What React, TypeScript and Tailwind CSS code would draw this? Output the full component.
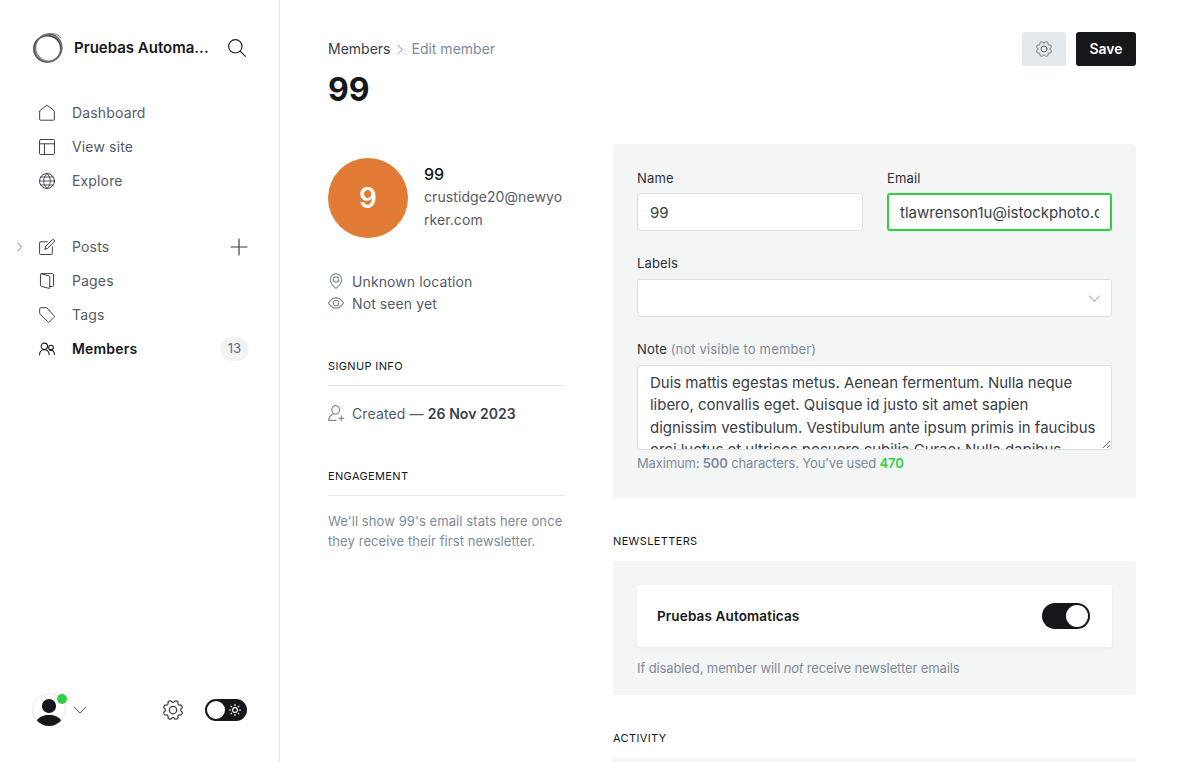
import React from "react";

type IconProps = { className?: string; children: React.ReactNode; sw?: number };

function Icon({ className = "", children, sw = 1.5 }: IconProps) {
  return (
    <svg viewBox="0 0 24 24" fill="none" stroke="currentColor" strokeWidth={sw} strokeLinecap="round" strokeLinejoin="round" className={`shrink-0 overflow-visible ${className}`}>
      {children}
    </svg>
  );
}

// Eight rounded teeth, with a notch at the top.
const gearPoints = Array.from({ length: 192 }, (_, i) => {
  const a = (i / 192) * Math.PI * 2;
  const r = 10.3 + 1.35 * Math.tanh(1.6 * (0.25 - Math.cos(8 * a)));
  return `${(12 + r * Math.sin(a)).toFixed(2)},${(12 - r * Math.cos(a)).toFixed(2)}`;
}).join(" ");

function Gear({ className }: { className?: string }) {
  return (
    <Icon className={className}>
      <polygon points={gearPoints} />
      <circle cx="12" cy="12" r="4.5" />
    </Icon>
  );
}

function Logo() {
  return (
    <svg viewBox="0 0 32 32" fill="none" className="h-8 w-8 shrink-0">
      <ellipse cx="15.4" cy="16.8" rx="13.5" ry="13.2" stroke="#4a4a4a" strokeWidth="1.7" />
      <ellipse cx="16.8" cy="15.7" rx="13.2" ry="13.5" stroke="#808080" strokeWidth="1.4" />
      <ellipse cx="16.1" cy="16.1" rx="14.2" ry="13" transform="rotate(-55 16.1 16.1)" stroke="#666" strokeWidth="1" />
      <path d="M14.5 2.3C19 .5 26 1.6 28.8 6.2" stroke="#777" strokeWidth="1" />
    </svg>
  );
}

const icons = {
  home: (
    <path d="M1 9.6V21.5A1.3 1.3 0 0 0 2.3 22.8H21.7A1.3 1.3 0 0 0 23 21.5V9.6A2 2 0 0 0 22.2 8L13 1A1.7 1.7 0 0 0 11 1L1.8 8A2 2 0 0 0 1 9.6Z" />
  ),
  layout: (
    <>
      <rect x=".8" y=".8" width="22.4" height="22.4" rx="1.5" />
      <path d="M1 7.2H23M8.2 7.2V23" />
    </>
  ),
  globe: (
    <>
      <circle cx="12" cy="12" r="11.2" />
      <path d="M1 12H23M2.8 6H21.2M2.8 18H21.2M12 .8C5.2 7 5.2 17 12 23.2M12 .8C18.8 7 18.8 17 12 23.2" strokeWidth="1.3" />
    </>
  ),
  edit: (
    <>
      <path d="M12.5 4.2H2.4A1.5 1.5 0 0 0 .9 5.7V21.7A1.5 1.5 0 0 0 2.4 23.2H18.4A1.5 1.5 0 0 0 19.9 21.7V12" />
      <path d="M9 15.1 10.1 11 19.7 1.4A2 2 0 0 1 22.6 4.3L13.1 14 9 15.1Z" />
    </>
  ),
  pages: (
    <>
      <path d="M3.4 1.2 15 4.3A1.6 1.6 0 0 1 16.1 5.8V22A1 1 0 0 1 14.8 23L3.3 20A1.6 1.6 0 0 1 2.2 18.4V2.3A1.5 1.5 0 0 1 3.7.9H20.3A1.5 1.5 0 0 1 21.8 2.4V18.7A1.5 1.5 0 0 1 20.3 20.2H16.4" />
    </>
  ),
  tag: (
    <path d="M1 2.7A1.7 1.7 0 0 1 2.7 1H10.6A2 2 0 0 1 12 1.6L22.6 13.2A1.6 1.6 0 0 1 22.6 15.4L15.5 22.5A1.6 1.6 0 0 1 13.3 22.5L1.7 10.7A2 2 0 0 1 1 9.3Z" />
  ),
  members: (
    <g strokeWidth="1.6">
      <circle cx="8" cy="8" r="4.8" />
      <path d="M.8 20.7C.8 10.6 15.2 10.6 15.2 20.7" />
      <circle cx="18" cy="9.8" r="3.5" />
      <path d="M16.2 14.2C20.6 13.1 23.2 16.2 23.2 20.2" />
    </g>
  ),
};

function NavItem({ icon, label }: { icon: React.ReactNode; label: string }) {
  return (
    <a className="flex h-[34px] items-center pl-[39px] text-[14px] tracking-[0.15px] text-[#555c66]">
      <Icon className="mr-[17px] h-4 w-4 text-[#394047]">{icon}</Icon>
      <span className="pb-px">{label}</span>
    </a>
  );
}

function Sidebar() {
  return (
    <nav className="flex h-full w-[280px] shrink-0 flex-col border-r border-[#e6e9eb] bg-white">
      <div className="flex h-24 items-center pl-8">
        <Logo />
        <span className="ml-[10px] w-[140px] text-[15px] font-semibold text-[#15171a]">Pruebas Automa...</span>
        <Icon className="ml-[14px] h-[18px] w-[18px] text-[#15171a]">
          <circle cx="9.8" cy="9.8" r="8.9" />
          <path d="M16.2 16.2 23.2 23.2" />
        </Icon>
      </div>
      <div>
        <NavItem icon={icons.home} label="Dashboard" />
        <NavItem icon={icons.layout} label="View site" />
        <NavItem icon={icons.globe} label="Explore" />
      </div>
      <div className="mt-8">
        <a className="flex h-[34px] items-center pl-4 text-[14px] tracking-[0.17px] text-[#555c66]">
          <Icon className="mr-[15px] h-2 w-2 text-[#7c8b9a]" sw={3}>
            <path d="M5 0 17 12 5 24" />
          </Icon>
          <Icon className="mr-[17px] h-4 w-4 text-[#394047]">{icons.edit}</Icon>
          <span className="flex-1 pb-px">Posts</span>
          <Icon className="mr-8 h-4 w-4 text-[#394047]" sw={1.8}>
            <path d="M12 0V24M0 12H24" />
          </Icon>
        </a>
        <NavItem icon={icons.pages} label="Pages" />
        <NavItem icon={icons.tag} label="Tags" />
        <a className="flex h-[34px] items-center pl-[39px] text-[14px] font-semibold tracking-[0.17px] text-[#15171a]">
          <Icon className="mr-[17px] h-4 w-4">{icons.members}</Icon>
          <span className="flex-1 pb-px">Members</span>
          <span className="mr-[30px] flex h-6 w-[29px] items-center justify-center rounded-full bg-[#f1f3f4] text-[13px] font-normal text-[#626d79]">13</span>
        </a>
      </div>
      <div className="mt-auto flex h-[104px] items-center pl-8">
        <div className="relative">
          <svg viewBox="0 0 34 34" className="h-[34px] w-[34px]">
            <clipPath id="avatar"><circle cx="17" cy="17" r="16" /></clipPath>
            <circle cx="17" cy="17" r="16.4" fill="#fff" stroke="#e6e9eb" strokeWidth="1" />
            <circle cx="17" cy="13" r="7.1" fill="#15171a" />
            <path clipPath="url(#avatar)" d="M5 27.5C8 20 26 20 29 27.5V34H5Z" fill="#15171a" />
          </svg>
          <span className="absolute top-[1px] left-[25px] h-[10px] w-[10px] rounded-full bg-[#30cf43]" />
        </div>
        <Icon className="ml-2 h-3 w-3 text-[#394047]" sw={1.8}>
          <path d="M.8 7 12 18 23.2 7" />
        </Icon>
        <Gear className="ml-[77px] h-5 w-5 text-[#394047]" />
        <div className="ml-[22px] flex h-[22px] w-[42px] items-center rounded-full bg-[#15171a] pl-[2px]">
          <span className="h-[18px] w-[18px] rounded-full bg-white" />
          <Icon className="ml-1 h-3 w-3 text-white" sw={2.2}>
            <circle cx="12" cy="12" r="4.8" />
            <path d="M12 .8V3.4M12 20.6V23.2M.8 12H3.4M20.6 12H23.2M4.1 4.1 5.6 5.6M18.4 18.4 19.9 19.9M4.1 19.9 5.6 18.4M18.4 5.6 19.9 4.1" />
          </Icon>
        </div>
      </div>
    </nav>
  );
}

function Heading({ children }: { children: React.ReactNode }) {
  return <h4 className="text-[11px] leading-4 tracking-[0.36px] text-[#15171a] uppercase">{children}</h4>;
}

function Profile() {
  return (
    <section className="w-[237px] shrink-0 text-[14px] text-[#555c66]">
      <div className="mt-[14px] flex h-20 gap-4">
        <div className="flex h-20 w-20 shrink-0 items-center justify-center rounded-full bg-[#e17b35] text-[28px] font-semibold text-white">9</div>
        <div className="pt-[5px]">
          <h3 className="text-[16px] leading-[22px] font-medium text-[#15171a]">99</h3>
          <p className="w-[141px] text-[14px] leading-[23px] tracking-[0.08px] break-all">crustidge20@newyorker.com</p>
        </div>
      </div>
      <div className="mt-[33px] tracking-[0.1px]">
        <p className="flex h-[22px] items-center gap-2">
          <Icon className="mb-[2px] h-4 w-4 text-[#7c8b9a]" sw={1.7}>
            <path d="M12 1.4A8.6 8.6 0 0 1 20.6 10C20.6 14.8 15.6 20.6 12.9 22.4A1.5 1.5 0 0 1 11.1 22.4C8.4 20.6 3.4 14.8 3.4 10A8.6 8.6 0 0 1 12 1.4Z" />
            <circle cx="12" cy="9.8" r="4" />
          </Icon>
          <span className="pb-px">Unknown location</span>
        </p>
        <p className="flex h-[22px] items-center gap-2">
          <Icon className="mb-[2px] h-4 w-4 text-[#7c8b9a]" sw={1.7}>
            <path d="M1.2 11C4.4 6.5 8 4.3 12 4.3S19.6 6.5 22.8 11A1.6 1.6 0 0 1 22.8 13C19.6 17.5 16 19.7 12 19.7S4.4 17.5 1.2 13A1.6 1.6 0 0 1 1.2 11Z" />
            <circle cx="12" cy="12" r="4.2" />
          </Icon>
          <span className="pb-px">Not seen yet</span>
        </p>
      </div>
      <div className="mt-[43px] border-b border-[#e6e9eb] pb-[11px]">
        <Heading>Signup info</Heading>
      </div>
      <p className="mt-[17px] flex h-[22px] items-center gap-2 tracking-[0.13px]">
        <Icon className="mb-[2px] h-4 w-4 text-[#7c8b9a]" sw={1.8}>
          <ellipse cx="11.5" cy="7.3" rx="5.8" ry="6.3" />
          <path d="M8.2 13.2C4 14.8 1.8 17.6 .8 23H12M20 16.4V23.6M16.4 20H23.6" />
        </Icon>
        <span className="pb-px">Created — <b className="font-semibold tracking-[0.05px] text-[#394047]">26 Nov 2023</b></span>
      </p>
      <div className="mt-[43px] border-b border-[#e6e9eb] pb-[11px]">
        <Heading>Engagement</Heading>
      </div>
      <p className="mt-[15px] text-[13px] leading-5 tracking-[0.08px] text-[#7c8b9a]">We&apos;ll show 99&apos;s email stats here once they receive their first newsletter.</p>
    </section>
  );
}

const note =
  "Duis mattis egestas metus. Aenean fermentum. Nulla neque libero, convallis eget. Quisque id justo sit amet sapien dignissim vestibulum. Vestibulum ante ipsum primis in faucibus orci luctus et ultrices posuere cubilia Curae; Nulla dapibus dolor vel est.";

function Details() {
  return (
    <section className="flex w-[523px] shrink-0 flex-col text-[13px] text-[#394047]">
      <div className="h-[354px] rounded-[3px] bg-[#f4f6f6] px-6 pt-6">
        <div className="flex gap-6">
          <label className="flex w-[226px] flex-col">
            <span className="mb-[5px] leading-5 tracking-[0.15px] text-[#2b2f35]">Name</span>
            <input className="h-[38px] w-full rounded-[3px] border border-[#dddfe0] bg-white px-3 text-[15px] tracking-[0px] text-[#394047] outline-none" defaultValue="99" />
          </label>
          <label className="flex w-[225px] flex-col">
            <span className="mb-[5px] leading-5 tracking-[0.15px] text-[#2b2f35]">Email</span>
            <input className="h-[38px] w-full rounded-[3px] border-2 border-[#30cf43] bg-white px-[11px] text-[15px] tracking-[0px] text-[#394047] outline-none" defaultValue="tlawrenson1u@istockphoto.com" />
          </label>
        </div>
        <div className="mt-[22px] leading-5 tracking-[0.15px] text-[#2b2f35]">Labels</div>
        <div className="mt-[6px] flex h-[38px] items-center justify-end rounded-[3px] border border-[#dddfe0] bg-white pr-[11px]">
          <Icon className="h-[11px] w-[11px] text-[#aab4be]" sw={2.2}>
            <path d="M.8 6.5 12 17.5 23.2 6.5" />
          </Icon>
        </div>
        <div className="mt-[22px] leading-5 tracking-[0.15px] text-[#2b2f35]">
          Note <span className="text-[#7c8b9a]">(not visible to member)</span>
        </div>
        <textarea className="mt-[6px] block h-[85px] w-full overflow-hidden rounded-[3px] border border-[#dddfe0] bg-white py-[5.7px] pr-[15px] pl-3 text-[15px] leading-[22.5px] tracking-[-0.02px] text-[#394047] outline-none" defaultValue={note} />
        <p className="mt-[3px] leading-5 tracking-[-0.15px] text-[#7c8b9a]">
          Maximum: <b className="font-semibold">500</b> characters. You’ve used <b className="font-semibold text-[#30cf43]">470</b>
        </p>
      </div>
      <div className="mt-[35px]"><Heading>Newsletters</Heading></div>
      <div className="mt-[12px] h-[134px] rounded-[3px] bg-[#f4f6f6] p-6">
        <div className="flex h-[62px] items-center justify-between rounded-[3px] bg-white pr-[22px] pl-5 shadow-[0_1px_3px_rgba(0,0,0,0.06)]">
          <span className="pt-px text-[13.5px] font-semibold tracking-[0.14px] text-[#15171a]">Pruebas Automaticas</span>
          <span className="flex h-[26px] w-12 items-center justify-end rounded-full bg-[#15171a] pr-[2px]">
            <span className="h-[22px] w-[22px] rounded-full bg-white" />
          </span>
        </div>
        <p className="mt-[11px] leading-5 tracking-[-0.11px] text-[#7c8b9a]">If disabled, member will <i>not</i> receive newsletter emails</p>
      </div>
      <div className="mt-[35px]"><Heading>Activity</Heading></div>
      <div className="mt-[12px] h-12 shrink-0 rounded-[3px] bg-[#f4f6f6]" />
    </section>
  );
}

export default function App() {
  return (
    <div className="flex h-[762px] w-[1184px] overflow-hidden bg-white font-['Inter',sans-serif]">
      <Sidebar />
      <main className="flex flex-1 flex-col pr-12 pl-12">
        <header className="flex h-36 shrink-0 justify-between pt-8">
          <div>
            <div className="flex items-center pt-[7px] text-[14px] leading-5 text-[#394047]">
              Members
              <Icon className="mx-[6px] h-[9px] w-[9px] text-[#7c8b9a]" sw={2.4}>
                <path d="M5 .8 17 12 5 23.2" />
              </Icon>
              <span className="text-[#7c8b9a]">Edit member</span>
            </div>
            <h2 className="mt-[11px] text-[32px] leading-10 font-bold text-[#15171a]">99</h2>
          </div>
          <div className="flex gap-[10px]">
            <button className="flex h-[34px] w-11 items-center justify-center rounded-[3px] bg-[#e6e9eb]">
              <Gear className="h-4 w-4 text-[#5f6670]" />
            </button>
            <button className="h-[34px] w-[60px] rounded-[3px] bg-[#15171a] pb-px text-[14px] font-semibold text-white">Save</button>
          </div>
        </header>
        <div className="flex gap-12">
          <Profile />
          <Details />
        </div>
      </main>
    </div>
  );
}
